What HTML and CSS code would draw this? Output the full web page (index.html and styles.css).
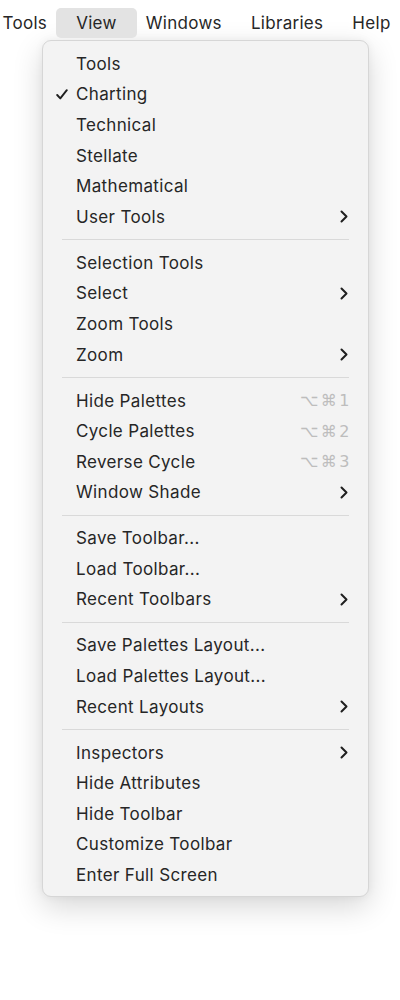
FILE: index.html
```html
<!DOCTYPE html>
<html>
<head>
<meta charset="utf-8">
<link rel="stylesheet" href="styles.css">
</head>
<body>
<div class="menubar">
  <span class="mb-item">Tools</span>
  <span class="mb-item active">View</span>
  <span class="mb-item">Windows</span>
  <span class="mb-item">Libraries</span>
  <span class="mb-item">Help</span>
</div>
<div class="menu">
  <div class="row"><span class="label">Tools</span></div>
  <div class="row"><span class="check"><svg width="12" height="11" viewBox="0 0 12 11"><path d="M1.2 6 L4.3 9.4 L10.8 1.2" fill="none" stroke="#1f1f1f" stroke-width="1.9" stroke-linecap="round" stroke-linejoin="round"/></svg></span><span class="label">Charting</span></div>
  <div class="row"><span class="label">Technical</span></div>
  <div class="row"><span class="label">Stellate</span></div>
  <div class="row"><span class="label">Mathematical</span></div>
  <div class="row"><span class="label">User Tools</span><span class="chev"><svg width="8" height="13" viewBox="0 0 8 13"><path d="M1.5 1.5 L6.5 6.5 L1.5 11.5" fill="none" stroke="#1f1f1f" stroke-width="2" stroke-linecap="round" stroke-linejoin="round"/></svg></span></div>
  <div class="sep"></div>
  <div class="row"><span class="label">Selection Tools</span></div>
  <div class="row"><span class="label">Select</span><span class="chev"><svg width="8" height="13" viewBox="0 0 8 13"><path d="M1.5 1.5 L6.5 6.5 L1.5 11.5" fill="none" stroke="#1f1f1f" stroke-width="2" stroke-linecap="round" stroke-linejoin="round"/></svg></span></div>
  <div class="row"><span class="label">Zoom Tools</span></div>
  <div class="row"><span class="label">Zoom</span><span class="chev"><svg width="8" height="13" viewBox="0 0 8 13"><path d="M1.5 1.5 L6.5 6.5 L1.5 11.5" fill="none" stroke="#1f1f1f" stroke-width="2" stroke-linecap="round" stroke-linejoin="round"/></svg></span></div>
  <div class="sep"></div>
  <div class="row"><span class="label">Hide Palettes</span><span class="key">⌥⌘1</span></div>
  <div class="row"><span class="label">Cycle Palettes</span><span class="key">⌥⌘2</span></div>
  <div class="row"><span class="label">Reverse Cycle</span><span class="key">⌥⌘3</span></div>
  <div class="row"><span class="label">Window Shade</span><span class="chev"><svg width="8" height="13" viewBox="0 0 8 13"><path d="M1.5 1.5 L6.5 6.5 L1.5 11.5" fill="none" stroke="#1f1f1f" stroke-width="2" stroke-linecap="round" stroke-linejoin="round"/></svg></span></div>
  <div class="sep"></div>
  <div class="row"><span class="label">Save Toolbar...</span></div>
  <div class="row"><span class="label">Load Toolbar...</span></div>
  <div class="row"><span class="label">Recent Toolbars</span><span class="chev"><svg width="8" height="13" viewBox="0 0 8 13"><path d="M1.5 1.5 L6.5 6.5 L1.5 11.5" fill="none" stroke="#1f1f1f" stroke-width="2" stroke-linecap="round" stroke-linejoin="round"/></svg></span></div>
  <div class="sep"></div>
  <div class="row"><span class="label">Save Palettes Layout...</span></div>
  <div class="row"><span class="label">Load Palettes Layout...</span></div>
  <div class="row"><span class="label">Recent Layouts</span><span class="chev"><svg width="8" height="13" viewBox="0 0 8 13"><path d="M1.5 1.5 L6.5 6.5 L1.5 11.5" fill="none" stroke="#1f1f1f" stroke-width="2" stroke-linecap="round" stroke-linejoin="round"/></svg></span></div>
  <div class="sep"></div>
  <div class="row"><span class="label">Inspectors</span><span class="chev"><svg width="8" height="13" viewBox="0 0 8 13"><path d="M1.5 1.5 L6.5 6.5 L1.5 11.5" fill="none" stroke="#1f1f1f" stroke-width="2" stroke-linecap="round" stroke-linejoin="round"/></svg></span></div>
  <div class="row"><span class="label">Hide Attributes</span></div>
  <div class="row"><span class="label">Hide Toolbar</span></div>
  <div class="row"><span class="label">Customize Toolbar</span></div>
  <div class="row"><span class="label">Enter Full Screen</span></div>
</div>
</body>
</html>
```

FILE: styles.css
```css
html, body {
  margin: 0;
  padding: 0;
  background: #ffffff;
}
body {
  font-family: Inter, "Noto Sans", "Liberation Sans", sans-serif;
  color: #262626;
  font-size: 17px;
  letter-spacing: 0.35px;
  width: 400px;
  height: 1000px;
  overflow: hidden;
}
.menubar {
  display: flex;
  align-items: center;
  height: 30px;
  margin-top: 8px;
  margin-left: -12px;
  white-space: nowrap;
}
.mb-item {
  padding: 0 14.5px;
  line-height: 30px;
  font-size: 17px;
  letter-spacing: 0.3px;
  color: #262626;
}
.mb-item.active {
  padding: 0 20px;
  margin: 0 -5.5px;
  background: #e3e3e3;
  border-radius: 5px;
}
.menu {
  margin: 2px 0 0 42px;
  width: 327px;
  box-sizing: border-box;
  background: #f3f3f3;
  border: 1px solid #d6d6d6;
  border-radius: 9px;
  padding: 7.5px 0 5.5px;
  box-shadow: 0 10px 30px rgba(0, 0, 0, 0.16), 0 0 8px rgba(0, 0, 0, 0.05);
}
.row {
  display: flex;
  align-items: center;
  height: 30.6px;
  padding: 0 20px 0 33px;
  position: relative;
}
.label {
  flex: 1;
}
.check {
  position: absolute;
  left: 13px;
  top: 10px;
  display: flex;
}
.chev {
  display: flex;
}
.key {
  color: #bdbdbd;
  font-family: "DejaVu Sans", Inter, sans-serif;
  font-size: 16px;
  letter-spacing: 2.5px;
  margin-right: -4px;
}
.sep {
  height: 15.4px;
  display: flex;
  align-items: center;
  margin: 0 19px;
}
.sep::before {
  content: "";
  display: block;
  width: 100%;
  height: 1px;
  background: #d9d9d9;
}
```
